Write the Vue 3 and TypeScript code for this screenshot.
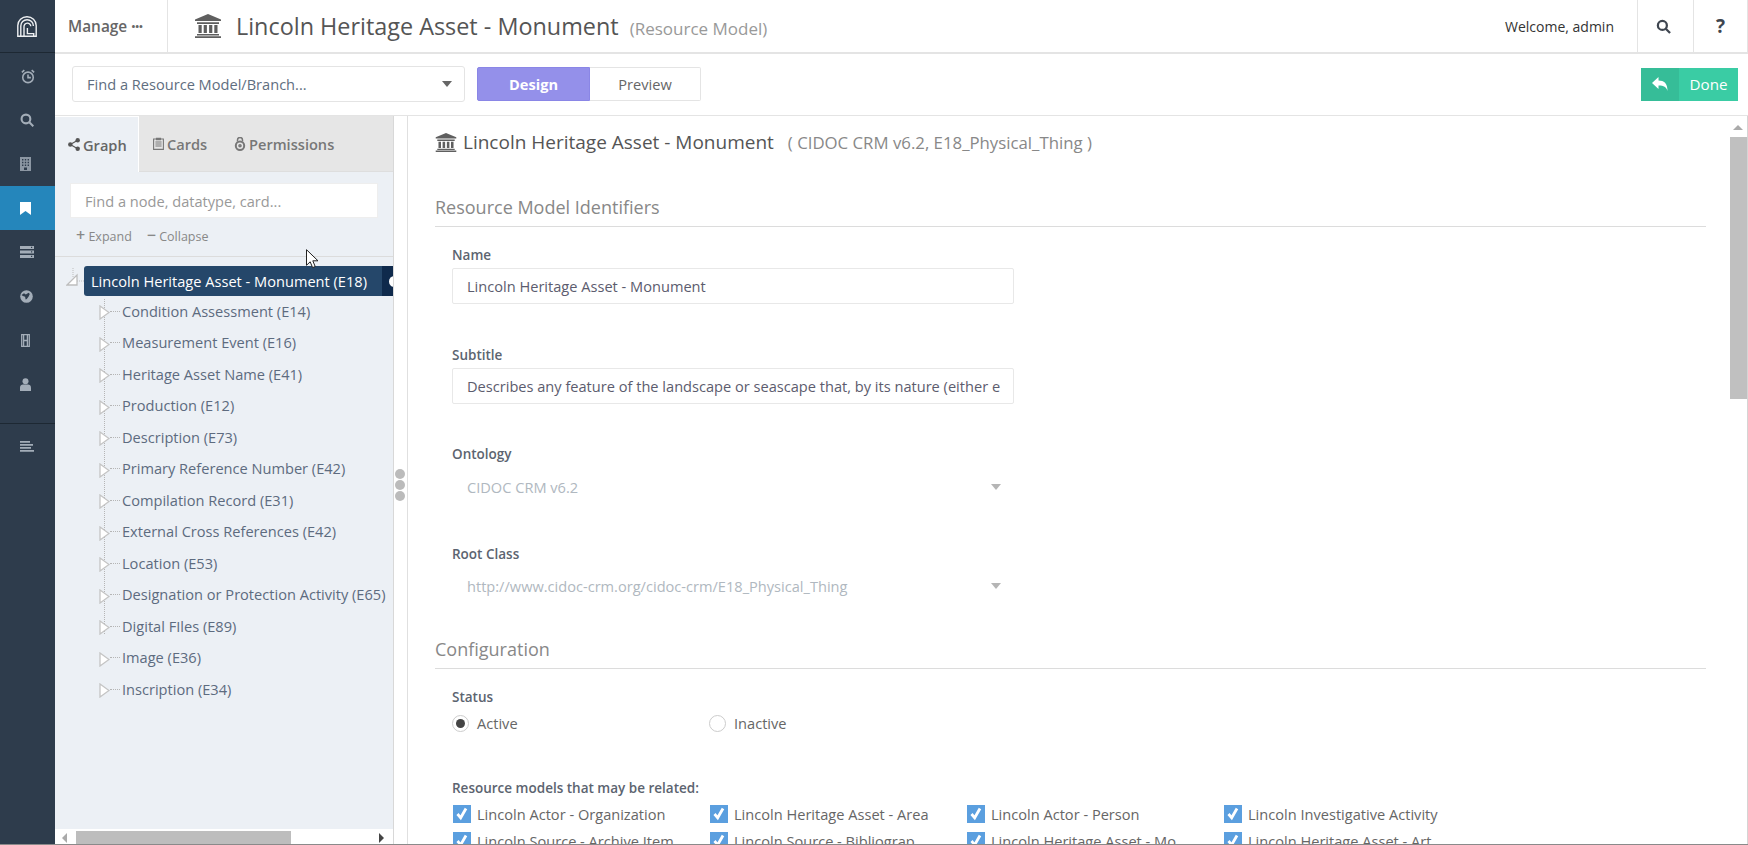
<template>
  <div class="app">
    <aside class="side">
      <div class="logo">
        <svg width="20" height="21" viewBox="0 0 20 21" fill="none" stroke="#eef0f2" stroke-width="1.4">
          <path d="M.8 20.200V9.500a9.200 8.800 0 0 1 18.400 0v10.700z" />
          <path d="M3.800 20V10a6.300 6.300 0 0 1 12.600 0" />
          <path d="M7 20v-9.300a3.400 3.400 0 0 1 6.800-.4" />
          <path d="M10.400 12v5.600h6.300V20" />
        </svg>
      </div>
      <nav class="side-nav">
        <a class="side-item">
          <svg class="nudge" width="14" height="15" viewBox="0 0 16 17" fill="none" stroke="#a3adb8" stroke-width="1.800">
            <circle cx="8" cy="9.500" r="6" />
            <path d="M8 6.200v3.600h3.300M1 3.800 3.800 1.200M15 3.800l-2.800-2.600" />
          </svg>
        </a>
        <a class="side-item">
          <svg width="14" height="14" viewBox="0 0 16 16" fill="none" stroke="#a3adb8" stroke-width="2.400">
            <circle cx="6.800" cy="6.800" r="5" />
            <path d="m10.400 10.400 4.800 4.800" />
          </svg>
        </a>
        <a class="side-item">
          <svg width="11" height="14" viewBox="0 0 11 14">
            <path fill="#8c97a3" fill-rule="evenodd" d="M0 0h11v14H0zM2 2v1.400h1.400V2zm2.800 0v1.400h1.400V2zm2.800 0v1.400H9V2zM2 4.800v1.400h1.400V4.800zm2.800 0v1.400h1.400V4.800zm2.800 0v1.400H9V4.800zM2 7.600V9h1.400V7.600zm2.800 0V9h1.400V7.600zm2.800 0V9H9V7.600zM4 10.600V13h3v-2.400z" />
          </svg>
        </a>
        <a class="side-item active">
          <svg width="11" height="13" viewBox="0 0 11 13"><path fill="#fff" d="M0 0h11v13L5.500 9 0 13z" /></svg>
        </a>
        <a class="side-item">
          <svg width="14" height="12" viewBox="0 0 14 12">
            <path fill="#a3adb8" fill-rule="evenodd" d="M0 0h14v3H0zm0 4.500h14v3H0zM0 9h14v3H0zM11 .8V2h1.200V.8zm0 4.500v1.200h1.200V5.300zm0 4.500V11h1.200V9.800z" />
          </svg>
        </a>
        <a class="side-item">
          <svg width="13" height="13" viewBox="0 0 13 13">
            <circle cx="6.500" cy="6.500" r="6.300" fill="#a3adb8" />
            <path fill="#2e3c4c" d="M1.500 5 4 3.200l1.800 1.200 2.800-1.600L9.800 4 8.500 6.800 6.800 9l-1.200.4-.5-2.600-2.200-.8z" />
          </svg>
        </a>
        <a class="side-item">
          <svg class="nudge" width="9" height="13" viewBox="0 0 9 13" fill="none" stroke="#a3adb8" stroke-width="1.300">
            <path d="M.7.700h7.600v11.600H.7zM2.600.700v11.600M6.400.700v11.600M2.600 6.500h3.800" />
          </svg>
        </a>
        <a class="side-item">
          <svg width="11" height="13" viewBox="0 0 11 13">
            <circle cx="5.500" cy="3.200" r="3" fill="#a3adb8" />
            <path fill="#a3adb8" d="M0 13V9.600C0 7.500 1.400 6.400 3 6.400h5c1.600 0 3 1.100 3 3.200V13z" />
          </svg>
        </a>
      </nav>
      <div class="side-foot">
        <svg width="14" height="11" viewBox="0 0 14 11">
          <path fill="#a3adb8" d="M0 0h10v1.700H0zm0 3h13v1.700H0zm0 3h11v1.700H0zm0 3h14v1.700H0z" />
        </svg>
      </div>
    </aside>

    <div class="page">
      <header class="topbar">
        <div class="manage">Manage <span class="dots">•••</span></div>
        <div class="graph-name">
          <svg class="bank" width="26" height="24" viewBox="0 0 26 24">
            <path fill="#5f5f5f" fill-rule="evenodd" d="M13 0l13 5.400V7H0V5.400zM2 8.200h22V10H2zM3.500 11h3.200v8H3.500zm5.200 0h3.200v8H8.700zm5.400 0h3.200v8h-3.200zm5.200 0h3.200v8h-3.200zM2 20h22v1.600H2zM0 22.200h26V24H0z" />
          </svg>
          <span class="graph-title">Lincoln Heritage Asset - Monument</span>
          <span class="graph-type">(Resource Model)</span>
        </div>
        <div class="welcome">Welcome, admin</div>
        <div class="top-btn search">
          <svg width="15" height="15" viewBox="0 0 16 16" fill="none" stroke="#3f4650" stroke-width="2.400">
            <circle cx="6.800" cy="6.800" r="4.800" />
            <path d="m10.400 10.400 4.600 4.600" />
          </svg>
        </div>
        <div class="top-btn help">?</div>
      </header>

      <div class="toolbar">
        <div class="model-select">
          <span>Find a Resource Model/Branch...</span>
          <i class="caret"></i>
        </div>
        <div class="mode-group">
          <button class="mode on">Design</button>
          <button class="mode">Preview</button>
        </div>
        <button class="done">
          <span class="done-icon">
            <svg width="16" height="14" viewBox="0 0 16 14">
              <path fill="#fff" d="M6.500 0v3.500c5.500 0 9 2.600 9 10.500-1.200-4-3.500-5.500-9-5.500V12L0 6z" />
            </svg>
          </span>
          <span class="done-label">Done</span>
        </button>
      </div>

      <div class="work">
        <section class="panel">
          <div class="tabs">
            <div class="tab active">
              <svg width="12" height="13" viewBox="0 0 12 13" fill="#555">
                <circle cx="2.300" cy="6.500" r="2.200" />
                <circle cx="9.700" cy="2.300" r="2.200" />
                <circle cx="9.700" cy="10.700" r="2.200" />
                <path stroke="#555" stroke-width="1.200" d="M2.300 6.500 9.700 2.300M2.300 6.500l7.400 4.200" />
              </svg>
              Graph
            </div>
            <div class="tab">
              <svg width="11" height="13" viewBox="0 0 11 13" fill="none" stroke="#777" stroke-width="1.100">
                <path d="M.600 2h9.800v10.400H.600zM3.500 1.200h4v1.600h-4zM2.400 5h6.200M2.400 7h6.200M2.400 9h6.200" />
              </svg>
              Cards
            </div>
            <div class="tab">
              <svg width="12" height="14" viewBox="0 0 12 14" fill="none" stroke="#777" stroke-width="2">
                <circle cx="6" cy="8.800" r="4.200" />
                <circle cx="6" cy="8.800" r=".8" />
                <path stroke-width="1.500" d="M3.500 4.500V3a2.500 2.500 0 0 1 5 0v1.500" />
              </svg>
              Permissions
            </div>
          </div>
          <div class="filter">
            <input class="filter-input" placeholder="Find a node, datatype, card..." />
            <div class="filter-actions">
              <span class="plain"><b>+</b> Expand</span>
              <span class="plain"><b class="minus">−</b> Collapse</span>
            </div>
          </div>
          <div class="tree">
            <div class="root">
              <svg class="flask" width="18" height="21" viewBox="0 0 18 21">
                <path fill="#fff" stroke="#bdbdbd" stroke-width="1.300" d="M1 17 11 7v10z" />
                <path fill="none" stroke="#bdbdbd" stroke-dasharray="1 1" d="M7 0v9M11 13h7" />
              </svg>
              <div class="root-node">
                <span>Lincoln Heritage Asset - Monument (E18)</span>
                <span class="root-btn"><i></i></span>
              </div>
            </div>
            <ul class="nodes">
              <li v-for="node in nodes" :key="node" class="node">
                <svg class="toggle" width="11" height="15" viewBox="0 0 11 15">
                  <path fill="#fff" stroke="#c4c4c4" stroke-width="1.300" d="M1 1 10 7.500 1 14z" />
                </svg>
                {{ node }}
              </li>
            </ul>
          </div>
          <div class="hscroll">
            <i class="arrow-left"></i>
            <div class="hthumb"></div>
            <i class="arrow-right"></i>
          </div>
        </section>

        <div class="gutter">
          <i></i><i></i><i></i>
        </div>

        <main class="main">
          <div class="content">
            <div class="model-title">
              <svg width="22" height="19" viewBox="0 0 26 24">
                <path fill="#5f5f5f" fill-rule="evenodd" d="M13 0l13 5.400V7H0V5.400zM2 8.200h22V10H2zM3.500 11h3.200v8H3.500zm5.200 0h3.200v8H8.700zm5.400 0h3.200v8h-3.200zm5.200 0h3.200v8h-3.200zM2 20h22v1.600H2zM0 22.200h26V24H0z" />
              </svg>
              <span class="model-name">Lincoln Heritage Asset - Monument</span>
              <span class="model-meta">( CIDOC CRM v6.2, E18_Physical_Thing )</span>
            </div>

            <h3 class="section first">Resource Model Identifiers</h3>
            <div class="fields">
              <div class="field">
                <label>Name</label>
                <div class="text-box">Lincoln Heritage Asset - Monument</div>
              </div>
              <div class="field">
                <label>Subtitle</label>
                <div class="text-box">Describes any feature of the landscape or seascape that, by its nature (either e</div>
              </div>
              <div class="field locked">
                <label>Ontology</label>
                <div class="off-select"><span>CIDOC CRM v6.2</span><i class="caret light"></i></div>
              </div>
              <div class="field locked">
                <label>Root Class</label>
                <div class="off-select"><span>http://www.cidoc-crm.org/cidoc-crm/E18_Physical_Thing</span><i class="caret light"></i></div>
              </div>
            </div>

            <h3 class="section">Configuration</h3>
            <div class="fields">
              <label class="status-label">Status</label>
              <div class="radios">
                <div class="radio-item"><span class="radio checked"></span>Active</div>
                <div class="radio-item"><span class="radio"></span>Inactive</div>
              </div>
              <label class="related-label">Resource models that may be related:</label>
              <div class="related">
                <div v-for="model in relatedModels" :key="model" class="related-item">
                  <svg class="check" width="18" height="18" viewBox="0 0 18 18">
                    <rect width="18" height="18" fill="#5b9fdf" />
                    <path fill="none" stroke="#fff" stroke-width="2.800" d="m4.500 9 3.200 3.800L13 3.500" />
                  </svg>
                  <span>{{ model }}</span>
                </div>
              </div>
            </div>
          </div>
          <div class="vscroll">
            <i class="arrow-up"></i>
            <div class="vthumb"></div>
          </div>
        </main>
      </div>
    </div>

    <svg class="cursor" width="13" height="20" viewBox="0 0 13 20">
      <path fill="#fff" stroke="#222" d="M.5.700v15.600l3.700-3.500 2.400 5.800 2.600-1.100-2.400-5.700h5.200z" />
    </svg>
  </div>
</template>

<script setup lang="ts">
const nodes: string[] = [
  'Condition Assessment (E14)',
  'Measurement Event (E16)',
  'Heritage Asset Name (E41)',
  'Production (E12)',
  'Description (E73)',
  'Primary Reference Number (E42)',
  'Compilation Record (E31)',
  'External Cross References (E42)',
  'Location (E53)',
  'Designation or Protection Activity (E65)',
  'Digital FIles (E89)',
  'Image (E36)',
  'Inscription (E34)'
]

// the second row is cut short in the original list
const relatedModels: string[] = [
  'Lincoln Actor - Organization',
  'Lincoln Heritage Asset - Area',
  'Lincoln Actor - Person',
  'Lincoln Investigative Activity',
  'Lincoln Source - Archive Item',
  'Lincoln Source - Bibliograp',
  'Lincoln Heritage Asset - Mo',
  'Lincoln Heritage Asset - Art'
]
</script>

<style>
html,
body {
  margin: 0;
  overflow: hidden;
}
</style>

<style scoped>
.app {
  position: relative;
  display: flex;
  width: 1748px;
  height: 845px;
  box-sizing: border-box;
  border-bottom: 1px solid #8a8a8a;
  overflow: hidden;
  background: #fff;
  color: #666;
  font-family: "Open Sans", sans-serif;
  font-size: 14.6px;
}

/* left rail */
.side {
  flex: 0 0 55px;
  display: flex;
  flex-direction: column;
  background: #2e3c4c;
}

.logo {
  height: 53px;
  box-sizing: border-box;
  border-bottom: 1px solid #1d2833;
  display: flex;
  align-items: center;
  padding-left: 17px;
}

.side-nav {
  display: flex;
  flex-direction: column;
  padding-top: 1px;
  padding-bottom: 17px;
  border-bottom: 1px solid #1d2833;
}

.side-item {
  height: 44px;
  display: flex;
  align-items: center;
  padding-left: 20px;
}

.side-item .nudge {
  margin-left: 1px;
}

.side-item.active {
  background: #2586bb;
}

.side-foot {
  height: 44px;
  display: flex;
  align-items: center;
  padding-left: 20px;
}

.page {
  flex: 1;
  min-width: 0;
  display: flex;
  flex-direction: column;
}

/* header */
.topbar {
  flex: 0 0 54px;
  box-sizing: border-box;
  display: flex;
  align-items: stretch;
  border-bottom: 2px solid #e4e4e4;
  border-right: 1px solid #e4e4e4;
}

.manage {
  width: 113px;
  box-sizing: border-box;
  padding-left: 13px;
  border-right: 1px solid #e4e4e4;
  display: flex;
  align-items: center;
  gap: 4px;
  font-size: 15.4px;
  font-weight: 600;
  color: #666;
}

.dots {
  font-size: 11.5px;
  letter-spacing: -0.5px;
}

.graph-name {
  flex: 1;
  display: flex;
  align-items: center;
  padding-left: 27px;
}

.bank {
  margin-right: 15px;
}

.graph-title {
  font-size: 23.4px;
  color: #555;
}

.graph-type {
  margin-left: 11px;
  font-size: 17px;
  color: #999;
  margin-top: 4px;
}

.welcome {
  display: flex;
  align-items: center;
  padding-right: 23px;
  color: #333;
  font-weight: 500;
  font-size: 14px;
}

.top-btn {
  width: 56px;
  box-sizing: border-box;
  border-left: 1px solid #e4e4e4;
  display: flex;
  align-items: center;
  justify-content: center;
  color: #3f4650;
  font-weight: 700;
}

.top-btn.search {
  padding-right: 4px;
}

.top-btn.help {
  width: 54px;
  font-size: 19px;
}

/* toolbar */
.toolbar {
  flex: 0 0 62px;
  box-sizing: border-box;
  display: flex;
  align-items: center;
  padding: 0 10px 1px 17px;
  border-bottom: 1px solid #e4e4e4;
}

.model-select {
  width: 393px;
  height: 36px;
  box-sizing: border-box;
  border: 1px solid #e4e4e4;
  border-radius: 3px;
  display: flex;
  align-items: center;
  justify-content: space-between;
  padding: 0 12px 0 14px;
  color: #5f6e80;
}

.caret {
  width: 0;
  height: 0;
  border-left: 5px solid transparent;
  border-right: 5px solid transparent;
  border-top: 6px solid #666;
}

.caret.light {
  border-top-color: #b5b5b5;
}

.mode-group {
  display: flex;
  margin-left: 12px;
  height: 34px;
}

.mode {
  width: 113px;
  padding: 0;
  font: inherit;
  border: 1px solid #e4e4e4;
  background: #fff;
  color: #666;
}

.mode + .mode {
  width: 111px;
  border-left: 0;
  border-radius: 0 2px 2px 0;
}

.mode.on {
  background: #9490ea;
  border-color: #8a86e6;
  color: #fff;
  font-weight: 700;
  border-radius: 2px 0 0 2px;
}

.done {
  margin-left: auto;
  height: 33px;
  width: 97px;
  padding: 0;
  border: 0;
  display: flex;
  background: #3acca4;
  color: #fff;
  font: inherit;
  font-size: 15.2px;
}

.done-icon {
  width: 38px;
  display: flex;
  align-items: center;
  justify-content: center;
  background: #36bd98;
}

.done-label {
  flex: 1;
  line-height: 33px;
  text-align: center;
}

.work {
  flex: 1;
  min-height: 0;
  display: flex;
}

/* graph panel */
.panel {
  flex: 0 0 339px;
  box-sizing: border-box;
  display: flex;
  flex-direction: column;
  background: #ecf0f5;
  border-right: 1px solid #d8d8d8;
}

.tabs {
  flex: 0 0 56px;
  box-sizing: border-box;
  display: flex;
  background: #e6e6e6;
  border-bottom: 1px solid #dedede;
}

.tab {
  flex: none;
  box-sizing: border-box;
  display: flex;
  align-items: center;
  gap: 3px;
  padding-left: 14px;
  color: #777;
  font-weight: 600;
}

.tab + .tab {
  width: 81px;
}

.tab.active {
  width: 84px;
  background: #ecf0f5;
  border: 1px solid #fff;
  border-left: 0;
  border-bottom: 0;
  padding-left: 13px;
  margin-bottom: -1px;
  color: #666;
}

.tab:last-child {
  width: auto;
}

.filter {
  flex: 0 0 85px;
  box-sizing: border-box;
  padding: 11px 15px 0;
  border-bottom: 1px solid #dcdcdc;
}

.filter-input {
  display: block;
  width: 100%;
  height: 35px;
  box-sizing: border-box;
  border: 1px solid #eee;
  background: #fff;
  padding: 0 14px;
  outline: none;
  font: inherit;
}

.filter-input::placeholder {
  color: #999;
  opacity: 1;
}

.filter-actions {
  display: flex;
  gap: 15px;
  padding: 10px 0 0 6px;
  font-size: 12.5px;
  color: #888;
}

.plain b {
  font-weight: 600;
  font-size: 16px;
  line-height: 12px;
}

.tree {
  flex: 1;
  min-height: 0;
  padding-top: 9px;
}

.root {
  position: relative;
  padding-left: 29px;
}

.flask {
  position: absolute;
  left: 11px;
  top: 2px;
}

.root-node {
  height: 30px;
  display: flex;
  align-items: center;
  justify-content: space-between;
  padding-left: 7px;
  background: #25476a;
  border-radius: 3px 0 0 3px;
  color: #fff;
}

.root-btn {
  width: 11px;
  align-self: stretch;
  background: #0f2a4c;
  overflow: hidden;
  display: flex;
  align-items: center;
}

.root-btn i {
  display: block;
  flex: none;
  width: 11px;
  height: 11px;
  margin-left: 7px;
  border-radius: 50%;
  background: #fff;
}

.nodes {
  position: relative;
  list-style: none;
  margin: -1px 0 0;
  padding: 0;
}

.nodes::before {
  content: "";
  position: absolute;
  left: 49px;
  top: 4px;
  height: 335px;
  border-left: 1px dotted #b5b5b5;
}

.node {
  position: relative;
  height: 31.5px;
  padding-left: 67px;
  display: flex;
  align-items: center;
  color: #5d6b7f;
  white-space: nowrap;
}

.node::before {
  content: "";
  position: absolute;
  left: 55px;
  top: 50%;
  width: 10px;
  border-top: 1px dotted #b5b5b5;
}

.toggle {
  position: absolute;
  left: 44px;
  top: 10px;
}

.hscroll {
  position: relative;
  flex: 0 0 15px;
  background: #fff;
}

.hthumb {
  position: absolute;
  left: 21px;
  top: 2px;
  width: 215px;
  height: 13px;
  background: #bdbdbd;
}

.arrow-left,
.arrow-right {
  position: absolute;
  top: 4px;
  width: 0;
  height: 0;
  border-top: 5px solid transparent;
  border-bottom: 5px solid transparent;
}

.arrow-left {
  left: 7px;
  border-right: 5px solid #aaa;
}

.arrow-right {
  right: 9px;
  border-left: 5px solid #444;
}

/* gutter between the panel and the form */
.gutter {
  position: relative;
  flex: 0 0 13px;
  border-right: 1px solid #e0e0e0;
}

.gutter i {
  position: absolute;
  left: 1px;
  width: 10px;
  height: 10px;
  border-radius: 50%;
  background: #bbb;
}

.gutter i:nth-child(1) {
  top: 353px;
}

.gutter i:nth-child(2) {
  top: 364px;
}

.gutter i:nth-child(3) {
  top: 375px;
}

/* form */
.main {
  flex: 1;
  min-width: 0;
  display: flex;
}

.content {
  flex: 1;
  min-width: 0;
  overflow: hidden;
  padding: 0 24px 0 27px;
  color: #666;
}

.model-title {
  display: flex;
  align-items: center;
  height: 26px;
  margin-top: 13px;
}

.model-name {
  margin-left: 6px;
  font-size: 19px;
  color: #555;
}

.model-meta {
  margin-left: 14px;
  font-size: 16.8px;
  color: #888;
}

.section {
  margin: 31px 0 0;
  height: 34px;
  box-sizing: border-box;
  border-bottom: 1px solid #dcdcdc;
  font-size: 18px;
  font-weight: 400;
  line-height: 28px;
  color: #888;
}

.section.first {
  margin-top: 38px;
}

.fields {
  padding-left: 17px;
  padding-top: 18px;
}

.field {
  margin-bottom: 40.7px;
}

.field.locked {
  margin-bottom: 39px;
}

.field:last-child {
  margin-bottom: 0;
}

label {
  display: block;
  height: 20px;
  line-height: 20px;
  font-weight: 600;
  color: #5c6470;
  font-size: 13.5px;
}

.text-box,
.off-select {
  margin-top: 3px;
  width: 562px;
  height: 36px;
  box-sizing: border-box;
  display: flex;
  align-items: center;
  white-space: nowrap;
  overflow: hidden;
}

.text-box {
  padding: 0 12px 0 14px;
  border: 1px solid #e8e8e8;
  border-radius: 2px;
  color: #5c5c6e;
}

.off-select {
  margin-top: 4.5px;
  justify-content: space-between;
  padding: 0 13px 0 15px;
  color: #b0b8c0;
}

.radios {
  display: flex;
  margin-top: 6px;
  height: 20px;
}

.radio-item {
  width: 257px;
  display: flex;
  align-items: center;
  gap: 8px;
  color: #666;
}

.radio {
  width: 17px;
  height: 17px;
  box-sizing: border-box;
  border: 1px solid #ccc;
  border-radius: 50%;
  background: #fff;
  position: relative;
}

.radio.checked::after {
  content: "";
  position: absolute;
  left: 3px;
  top: 3px;
  width: 9px;
  height: 9px;
  border-radius: 50%;
  background: #444;
}

.related-label {
  margin-top: 45px;
}

.related {
  display: grid;
  grid-template-columns: 257px 257px 257px 260px;
  row-gap: 7px;
  margin-top: 6px;
}

.related-item {
  display: flex;
  align-items: center;
  gap: 6px;
  height: 20px;
  padding-left: 1px;
  overflow: hidden;
  white-space: nowrap;
  color: #666;
}

.check {
  flex: none;
}

/* form scrollbar */
.vscroll {
  position: relative;
  flex: 0 0 18px;
  box-sizing: border-box;
  border-right: 1px solid #d5d5d5;
}

.arrow-up {
  position: absolute;
  left: 3px;
  top: 9px;
  border-left: 5px solid transparent;
  border-right: 5px solid transparent;
  border-bottom: 5px solid #aaa;
}

.vthumb {
  position: absolute;
  left: 0;
  right: 0;
  top: 21px;
  height: 262px;
  background: #c0c0c0;
}

.cursor {
  position: absolute;
  left: 306px;
  top: 249px;
}
</style>
